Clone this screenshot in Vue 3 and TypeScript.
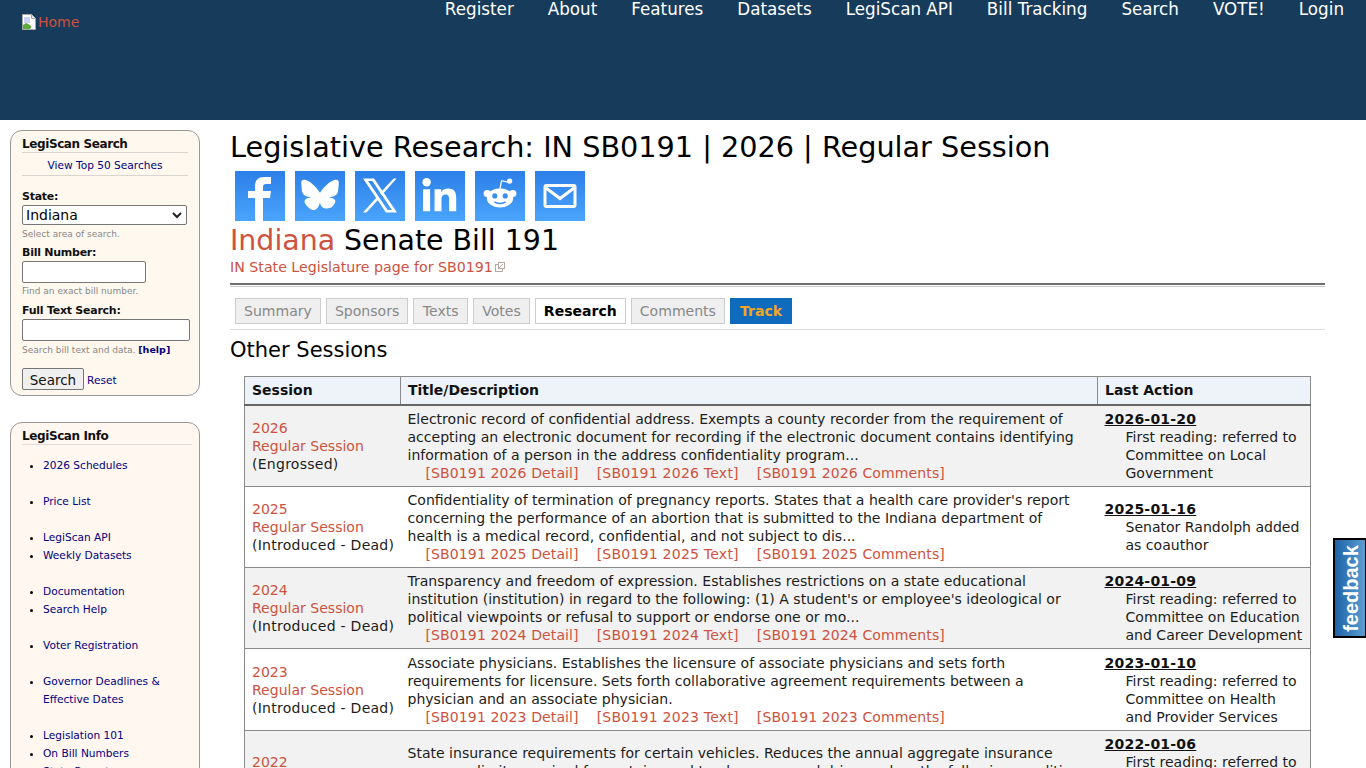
<script setup lang="ts">
interface Session {
  year: number
  status: string
  desc: string[]
  date: string
  action: string[]
}

const navItems = ['Register', 'About', 'Features', 'Datasets', 'LegiScan API', 'Bill Tracking', 'Search', 'VOTE!', 'Login']
const tabs = ['Summary', 'Sponsors', 'Texts', 'Votes', 'Research', 'Comments']

const infoGroups = [
  ['2026 Schedules'],
  ['Price List'],
  ['LegiScan API', 'Weekly Datasets'],
  ['Documentation', 'Search Help'],
  ['Voter Registration'],
  ['Governor Deadlines & Effective Dates'],
  ['Legislation 101', 'On Bill Numbers', 'State Reports']
]

const sessions: Session[] = [
  {
    year: 2026,
    status: '(Engrossed)',
    desc: [
      'Electronic record of confidential address. Exempts a county recorder from the requirement of',
      'accepting an electronic document for recording if the electronic document contains identifying',
      'information of a person in the address confidentiality program...'
    ],
    date: '2026-01-20',
    action: ['First reading: referred to', 'Committee on Local', 'Government']
  },
  {
    year: 2025,
    status: '(Introduced - Dead)',
    desc: [
      'Confidentiality of termination of pregnancy reports. States that a health care provider\'s report',
      'concerning the performance of an abortion that is submitted to the Indiana department of',
      'health is a medical record, confidential, and not subject to dis...'
    ],
    date: '2025-01-16',
    action: ['Senator Randolph added', 'as coauthor']
  },
  {
    year: 2024,
    status: '(Introduced - Dead)',
    desc: [
      'Transparency and freedom of expression. Establishes restrictions on a state educational',
      'institution (institution) in regard to the following: (1) A student\'s or employee\'s ideological or',
      'political viewpoints or refusal to support or endorse one or mo...'
    ],
    date: '2024-01-09',
    action: ['First reading: referred to', 'Committee on Education', 'and Career Development']
  },
  {
    year: 2023,
    status: '(Introduced - Dead)',
    desc: [
      'Associate physicians. Establishes the licensure of associate physicians and sets forth',
      'requirements for licensure. Sets forth collaborative agreement requirements between a',
      'physician and an associate physician.'
    ],
    date: '2023-01-10',
    action: ['First reading: referred to', 'Committee on Health', 'and Provider Services']
  },
  {
    year: 2022,
    status: '(Introduced - Dead)',
    desc: [
      'State insurance requirements for certain vehicles. Reduces the annual aggregate insurance',
      'coverage limits required for certain used truck owners and drivers when the following conditi...',
      'are met, including a requirement that the vehicle be registered...'
    ],
    date: '2022-01-06',
    action: ['First reading: referred to', 'Committee on Homeland', 'Security and Public', 'Safety']
  }
]
</script>

<template>
  <div class="page">
    <header class="top">
      <a class="home"><span class="broken"><svg width="16" height="16" viewBox="0 0 16 16"><path d="M1.500.5h9l4 4v11h-13z" fill="#fff" stroke="#a8a8a8"/><path d="M10.500.5v4h4" fill="#e6e6e6" stroke="#a8a8a8"/><rect x="3" y="3" width="6" height="6" fill="#c9d4f5"/><path d="M2 15v-4l3-2 4 2 3 4z" fill="#5fa83c"/><path d="M9 15l5-6v6z" fill="#fff"/></svg></span>Home</a>
      <nav class="nav">
        <a v-for="n in navItems" :key="n">{{ n }}</a>
      </nav>
    </header>

    <div class="body">
      <aside class="side">
        <section class="box search-box">
          <h3>LegiScan Search</h3>
          <div class="top50"><a>View Top 50 Searches</a></div>
          <label class="first">State:</label>
          <div class="fake-select">Indiana<svg width="10" height="7" viewBox="0 0 10 7"><path d="M1 1l4 4 4-4" fill="none" stroke="#222" stroke-width="2"/></svg></div>
          <div class="hint">Select area of search.</div>
          <label>Bill Number:</label>
          <input class="in-bill" type="text" />
          <div class="hint">Find an exact bill number.</div>
          <label>Full Text Search:</label>
          <input class="in-full" type="text" />
          <div class="hint">Search bill text and data. <a class="help">[help]</a></div>
          <div class="actions">
            <button type="button">Search</button>
            <a class="reset">Reset</a>
          </div>
        </section>

        <section class="box info-box">
          <h3>LegiScan Info</h3>
          <ul v-for="(g, i) in infoGroups" :key="i">
            <li v-for="item in g" :key="item"><a>{{ item }}</a></li>
          </ul>
        </section>
      </aside>

      <main class="main">
        <h1>Legislative Research: IN SB0191 | 2026 | Regular Session</h1>
        <div class="share">
          <a class="sq">
            <svg viewBox="0 0 50 50"><path d="M20 50V27h-7v-7h7v-5c0-6 3.500-9 9-9h7v7h-5c-2 0-3 1-3 3v4h8l-1 7h-7v23z" fill="#fff"/></svg>
          </a>
          <a class="sq">
            <svg viewBox="0 0 50 50"><g transform="translate(0 1) scale(1 .89)"><path d="M25 23.400c-1.700-3.300-6.300-9.500-10.600-12.500C10.300 8 8.700 8.500 7.700 9c-1.200.5-1.400 2.400-1.400 3.500s.6 9 1 10.300c1.300 4.400 6 5.900 10.300 5.400-6.300 1-11.900 3.200-4.500 11.300 8.100 8.400 11.100-1.800 11.900-5.100.8 3.300 1.800 9.500 11.800 5.100 7.500-8.100 2-10.300-4.300-11.300 4.300.5 9-1 10.300-5.400.4-1.300 1-9.200 1-10.300s-.2-3-1.400-3.500c-1-.5-2.600-1-6.700 1.900C31.300 13.900 26.700 20.100 25 23.400z" fill="#fff"/></g></svg>
          </a>
          <a class="sq">
            <svg viewBox="0 0 50 50"><g transform="translate(3.750 3.200) scale(.85)"><path d="M5 5h13l27 40H32zM11 8l23 34h5L16 8z" fill="#fff" fill-rule="evenodd"/><path d="M41 5h3.500L27 24.800l-1.900-2.700zM21.400 26.700l1.900 2.700L9 45H5z" fill="#fff"/></g></svg>
          </a>
          <a class="sq">
            <svg viewBox="0 0 50 50"><g transform="translate(1.500 1.500) scale(.88)"><circle cx="11.500" cy="11" r="4.800" fill="#fff"/><path d="M7.500 19h8v25h-8zM20.500 19h7.600v3.500c1.300-2.300 4-4.200 8-4.200 7.300 0 9 4.500 9 11V44h-8V31c0-3.300-.7-5.900-4-5.900-3.400 0-4.700 2.500-4.700 5.800V44h-7.900z" fill="#fff"/></g></svg>
          </a>
          <a class="sq">
            <svg viewBox="0 0 50 50"><g transform="translate(5 2.500) scale(.8)"><ellipse cx="25" cy="30.500" rx="16.500" ry="12" fill="#fff"/><circle cx="9" cy="25" r="4.500" fill="#fff"/><circle cx="41" cy="25" r="4.500" fill="#fff"/><circle cx="37" cy="9.500" r="3.300" fill="#fff"/><path d="M25 19l2-10 8 1.700" fill="none" stroke="#fff" stroke-width="1.600"/><circle cx="18.500" cy="28" r="3.200" fill="#3a8df0"/><circle cx="31.500" cy="28" r="3.200" fill="#3a8df0"/><path d="M18 35.500c3.500 2.700 10.500 2.700 14 0" fill="none" stroke="#3a8df0" stroke-width="1.800"/></g></svg>
          </a>
          <a class="sq">
            <svg viewBox="0 0 50 50"><rect x="10" y="14.500" width="30" height="21" rx="1.500" fill="none" stroke="#fff" stroke-width="3"/><path d="M11 17l14 10.500L39 17" fill="none" stroke="#fff" stroke-width="3"/></svg>
          </a>
        </div>
        <h2 class="bill"><a>Indiana</a> Senate Bill 191</h2>
        <div class="state-link">
          <a>IN State Legislature page for SB0191</a>
          <svg width="10" height="10" viewBox="0 0 10 10"><rect x=".5" y="2.500" width="7" height="7" fill="none" stroke="#b9a9a5"/><rect x="3.500" y=".5" width="6" height="6" fill="#fff" stroke="#b9a9a5"/><path d="M4 6l4-4" stroke="#b9a9a5"/></svg>
        </div>
        <div class="rule"></div>
        <div class="tabs">
          <a v-for="t in tabs" :key="t" class="tab" :class="{ active: t === 'Research' }">{{ t }}</a>
          <a class="tab track">Track</a>
        </div>
        <h2 class="other">Other Sessions</h2>

        <div class="table-wrap">
          <table class="sessions">
            <thead>
              <tr>
                <th class="c1">Session</th>
                <th class="c2">Title/Description</th>
                <th class="c3">Last Action</th>
              </tr>
            </thead>
            <tbody>
              <tr v-for="s in sessions" :key="s.year">
                <td class="sess">
                  <a>{{ s.year }}</a><br /><a>Regular Session</a><br /><span class="status">{{ s.status }}</span>
                </td>
                <td class="desc">
                  <div v-for="line in s.desc" :key="line" class="ln">{{ line }}</div>
                  <div class="links">
                    <a>[SB0191 {{ s.year }} Detail]</a>
                    <a>[SB0191 {{ s.year }} Text]</a>
                    <a>[SB0191 {{ s.year }} Comments]</a>
                  </div>
                </td>
                <td class="act">
                  <div class="date">{{ s.date }}</div>
                  <div class="act-text">
                    <div v-for="line in s.action" :key="line" class="ln">{{ line }}</div>
                  </div>
                </td>
              </tr>
            </tbody>
          </table>
        </div>
      </main>
    </div>

    <a class="feedback"><span>feedback</span></a>
  </div>
</template>

<style>
html, body {
  margin: 0;
  height: 768px;
  overflow: hidden;
  background: #fff;
}
</style>

<style scoped>
.page {
  font-family: "DejaVu Sans", Verdana, sans-serif;
  color: #000;
  height: 768px;
  overflow: hidden;
}

.top {
  height: 120px;
  background: #173b5b;
  display: flex;
  justify-content: space-between;
  align-items: flex-start;
}

.home {
  display: flex;
  align-items: center;
  margin: 13px 0 0 21px;
  color: #d0503e;
  font-size: 14px;
  line-height: 18px;
}

.broken {
  width: 17px;
  height: 16px;
  display: block;
}

.nav {
  display: flex;
  gap: 34px;
  padding-right: 22px;
  margin-top: -1px;
}

.nav a {
  color: #fff;
  font-size: 16.750px;
  line-height: 20px;
}

.body {
  display: flex;
  align-items: flex-start;
}

.side {
  width: 190px;
  margin: 10px 0 0 10px;
  flex-shrink: 0;
}

.box {
  border: 1px solid #999;
  border-radius: 12px;
  box-sizing: border-box;
  width: 190px;
}

.box h3 {
  margin: 0;
  font-size: 12px;
  line-height: 14px;
  font-weight: bold;
  letter-spacing: -.4px;
  color: #111;
}

.search-box {
  background: #fff8ee;
  height: 266px;
  padding: 6px 11px 0;
  margin-bottom: 26px;
}

.search-box h3 {
  padding-bottom: 1px;
  border-bottom: 1px solid #d9d4d0;
}

.top50 {
  text-align: center;
  font-size: 10.600px;
  line-height: 14px;
  padding: 5px 0 3px;
  border-bottom: 1px solid #d9d4d0;
}

a {
  cursor: pointer;
}

.side a {
  color: #000080;
  font-size: 10.600px;
}

label {
  display: block;
  font-size: 11px;
  line-height: 14px;
  font-weight: bold;
  letter-spacing: -.25px;
  color: #111;
  margin: 6px 0 1px;
}

label.first {
  margin-top: 14px;
}

.fake-select {
  box-sizing: border-box;
  width: 165px;
  height: 20px;
  border: 1px solid #767676;
  border-radius: 2px;
  background: #fff;
  font-size: 14px;
  line-height: 18px;
  padding-left: 3px;
  display: flex;
  justify-content: space-between;
  align-items: center;
}

.fake-select svg {
  margin-right: 4px;
}

input {
  display: block;
  box-sizing: border-box;
  height: 22px;
  border: 1px solid #767676;
  border-radius: 2px;
  background: #fff;
  padding: 0;
}

.in-bill {
  width: 124px;
}

.in-full {
  width: 168px;
  margin-top: 1px;
}

.hint {
  font-size: 9px;
  line-height: 12px;
  color: #888;
  margin-top: 3px;
}

.in-bill + .hint {
  margin: 2px 0 7px;
}

.side a.help {
  font-size: 9.500px;
  font-weight: bold;
}

.actions {
  display: flex;
  align-items: center;
  gap: 3px;
  margin-top: 12px;
}

.actions button {
  box-sizing: border-box;
  width: 62px;
  height: 22px;
  font-family: inherit;
  font-size: 13.500px;
  color: #111;
  background: #efefef;
  border: 1px solid #767676;
  border-radius: 2px;
  padding: 2px 0 0;
}

.reset {
  margin-top: 2px;
}

.info-box {
  background: #fff7f0;
  padding: 6px 11px 20px;
}

.info-box h3 {
  padding-bottom: 1px;
  border-bottom: 1px solid #e2ddd8;
  margin-right: -4px;
  margin-bottom: 11px;
}

.info-box ul {
  margin: 0 0 18px;
  padding: 0 0 0 21px;
}

.info-box li {
  font-size: 10.600px;
  line-height: 18px;
}

.main {
  width: 1095px;
  margin-left: 30px;
  flex-shrink: 0;
}

h1 {
  margin: 10px 0 0;
  font-weight: normal;
  font-size: 28.700px;
  line-height: 34px;
}

.share {
  display: flex;
  gap: 10px;
  padding: 7px 0 0 5px;
}

.sq {
  display: block;
  width: 50px;
  height: 50px;
  background: linear-gradient(to bottom, #2c7fe8, #4aa4fb);
}

.sq svg {
  display: block;
  width: 50px;
  height: 50px;
}

.bill {
  margin: 2px 0 0;
  font-weight: normal;
  font-size: 28.400px;
  line-height: 36px;
}

.main a {
  color: #cd5240;
}

.state-link {
  font-size: 14.200px;
  line-height: 18px;
  margin-top: -1px;
  display: flex;
  align-items: center;
  gap: 2px;
}

.rule {
  margin-top: 7px;
  height: 1px;
  border-top: 2px solid #6e6e6e;
  border-bottom: 1px solid #c8c8c8;
}

.tabs {
  display: flex;
  gap: 5px;
  padding: 0 0 5px 5px;
  margin-top: 11px;
  border-bottom: 1px solid #dcdcdc;
}

.main a.tab {
  box-sizing: border-box;
  height: 26px;
  min-width: 55px;
  text-align: center;
  line-height: 24px;
  padding: 0 8px;
  font-size: 14.050px;
  background: #efefef;
  color: #888;
  border: 1px solid #ccc;
}

.main a.tab.active {
  background: #fff;
  color: #000;
  font-weight: bold;
}

.main a.tab.track {
  padding: 0 9px;
  background: #0f6cbd;
  color: #f5a623;
  font-weight: bold;
  border-color: #0f6cbd;
}

.other {
  margin: 7px 0 0;
  font-weight: normal;
  font-size: 21px;
  line-height: 26px;
}

.table-wrap {
  padding: 13px 14px 0;
}

.sessions {
  border-collapse: collapse;
  width: 1067px;
  table-layout: fixed;
  font-size: 14.040px;
  line-height: 18px;
}

.c1 {
  width: 156px;
}

.c3 {
  width: 213px;
}

th {
  box-sizing: border-box;
  height: 28px;
  padding: 0 7px;
  text-align: left;
  background: #edf3f9;
  font-size: 14px;
  font-weight: bold;
  color: #111;
  border: 1px solid #8a8a8a;
  border-bottom: 2px solid #666;
}

td {
  padding: 4.170px 7px;
  border-top: 1px solid #8a8a8a;
  border-bottom: 1px solid #8a8a8a;
  vertical-align: middle;
  color: #1c1c1c;
}

td:first-child {
  border-left: 1px solid #8a8a8a;
}

td:last-child {
  border-right: 1px solid #8a8a8a;
}

tbody tr:nth-child(odd) td {
  background: #f2f2f2;
}

.sess {
  white-space: nowrap;
}

.status {
  letter-spacing: .25px;
}

.ln {
  white-space: nowrap;
}

.links {
  display: flex;
  gap: 18px;
  padding-left: 18px;
  letter-spacing: .1px;
}

.links a:nth-child(2) {
  letter-spacing: .22px;
}

.date {
  font-weight: bold;
  text-decoration: underline;
  color: #111;
  letter-spacing: .2px;
}

.act-text {
  padding-left: 21px;
}

.feedback {
  position: fixed;
  right: -1px;
  top: 538px;
  width: 34px;
  height: 100px;
  box-sizing: border-box;
  background: linear-gradient(to right, #1f62a6, #5a9ed2);
  border: 2px solid #000;
  outline: 1px solid #fff;
  padding-left: 3px;
  display: flex;
  align-items: center;
  justify-content: center;
}

.feedback span {
  color: #fff;
  font-family: "Liberation Sans", Arial, sans-serif;
  font-weight: bold;
  font-size: 20px;
  transform: rotate(-90deg);
  white-space: nowrap;
}
</style>
